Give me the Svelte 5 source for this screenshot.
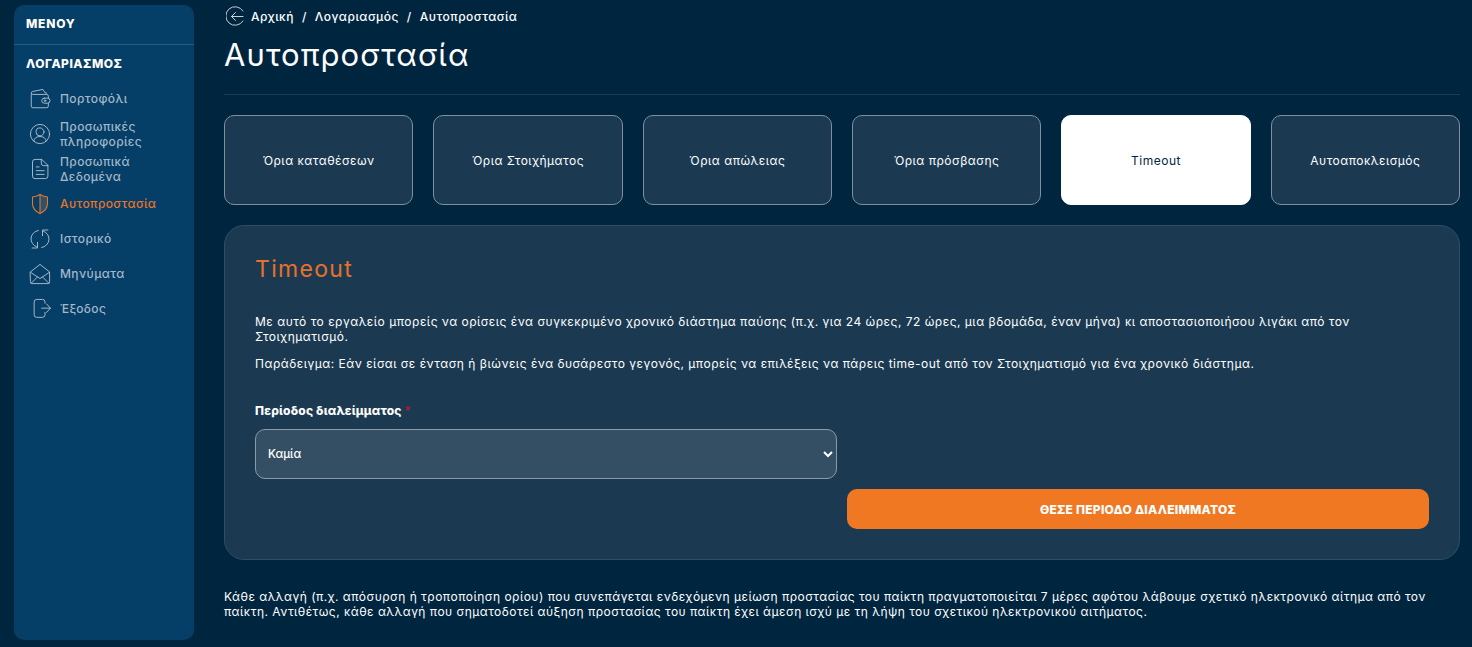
<script>
  const menu = [
    { label: "Πορτοφόλι", icon: "wallet" },
    { label: "Προσωπικές πληροφορίες", icon: "user" },
    { label: "Προσωπικά Δεδομένα", icon: "doc" },
    { label: "Αυτοπροστασία", icon: "shield", active: true },
    { label: "Ιστορικό", icon: "history" },
    { label: "Μηνύματα", icon: "mail" },
    { label: "Έξοδος", icon: "exit" }
  ];
  const tabs = ["Όρια καταθέσεων", "Όρια Στοιχήματος", "Όρια απώλειας", "Όρια πρόσβασης", "Timeout", "Αυτοαποκλεισμός"];
</script>

<div class="page">
  <aside class="sidebar">
    <div class="side-head">ΜΕΝΟΥ</div>
    <div class="side-title">ΛΟΓΑΡΙΑΣΜΟΣ</div>
    <nav class="side-menu">
      {#each menu as item}
        <a class="side-item" class:active={item.active} href="#top">
          <svg class="side-icon" viewBox="0 0 24 24" fill="none" stroke="currentColor" stroke-width="1.100" stroke-linecap="round" stroke-linejoin="round">
            {#if item.icon === "wallet"}
              <path d="M1.500 6.500V20.500a2 2 0 0 0 2 2h16.500a2 2 0 0 0 2-2v-3.500M22 11V8.500a2 2 0 0 0-2-2H3.500a2 2 0 0 1-2-2 1.800 1.800 0 0 1 1.500-1.500L15.500.5 18 4.500l2 .5" />
              <rect x="14" y="11" width="10" height="6" rx="3" />
              <circle cx="18" cy="14" r="1" />
            {:else if item.icon === "user"}
              <circle cx="12" cy="12" r="11.500" />
              <circle cx="12" cy="9.500" r="4.800" />
              <path d="M4.500 20.500c.5-3.500 3.500-5.500 7.500-5.500s7 2 7.500 5.500" />
            {:else if item.icon === "doc"}
              <path d="M13.500 .5H6A3 3 0 0 0 3 3.500v17a3 3 0 0 0 3 3h12.500a3 3 0 0 0 3-3V8z" />
              <path d="M13.500 .5V5a3 3 0 0 0 3 3h5M7.500 9.500h3.500M7.500 14h9.500M7.500 18.500h9.500" />
            {:else if item.icon === "shield"}
              <path d="M12 .5V23.500c5.400-2.400 9-6.800 9-12V3.500C17.500 3.300 15 2.300 12 .5z" fill="#33506a" stroke="none" />
              <path d="M12 .5c3 1.800 5.500 2.800 9 3v8c0 5.200-3.600 9.600-9 12-5.400-2.400-9-6.800-9-12v-8c3.500-.2 6-1.200 9-3z" stroke-width="1.300" />
              <path d="M12 .5v23" stroke-width="1.300" />
            {:else if item.icon === "history"}
              <path d="M16 2.500A10.200 10.200 0 0 1 14 22.200" />
              <path d="M21.500 1.200h-6.500V8" />
              <path d="M8 21.500A10.200 10.200 0 0 1 10 1.800" />
              <path d="M2.500 22.800H9V16" />
            {:else if item.icon === "mail"}
              <path d="M.5 9.500 12 .5l11.500 9v12a2 2 0 0 1-2 2h-19a2 2 0 0 1-2-2z" />
              <path d="M.8 10 12 17.500 23.200 10M1.500 23l7.500-7.500M22.500 23 15 15.500" />
            {:else}
              <path d="M18 5V3.500A3 3 0 0 0 15 .5H8a3 3 0 0 0-3 3V19a3 3 0 0 0 3 3h7a3 3 0 0 0 3-3v-3" />
              <path d="M14 11h10.500M20 6l4.500 5-4.500 5" />
            {/if}
          </svg>
          <span>{item.label}</span>
        </a>
      {/each}
    </nav>
  </aside>

  <main class="content">
    <div class="crumbs">
      <svg class="back" viewBox="0 0 20 20" fill="none" stroke="currentColor" stroke-width="1" stroke-linecap="round" stroke-linejoin="round">
        <path d="M17 5A9.300 9.300 0 1 0 17 15" />
        <path d="M5.500 10.500H17M5.500 10.500l4-4M5.500 10.500l4 4" />
      </svg>
      <span>Αρχική</span><i>/</i><span>Λογαριασμός</span><i>/</i><span>Αυτοπροστασία</span>
    </div>
    <h1>Αυτοπροστασία</h1>
    <hr />

    <div class="tabs">
      {#each tabs as tab}
        <button class="tab" class:active={tab === "Timeout"}>{tab}</button>
      {/each}
    </div>

    <section class="card">
      <h2>Timeout</h2>
      <p class="first">Με αυτό το εργαλείο μπορείς να ορίσεις ένα συγκεκριμένο χρονικό διάστημα παύσης (π.χ. για 24 ώρες, 72 ώρες, μια βδομάδα, έναν μήνα) κι αποστασιοποιήσου λιγάκι από τον Στοιχηματισμό.</p>
      <p>Παράδειγμα: Εάν είσαι σε ένταση ή βιώνεις ένα δυσάρεστο γεγονός, μπορείς να επιλέξεις να πάρεις time-out από τον Στοιχηματισμό για ένα χρονικό διάστημα.</p>
      <div class="form">
        <label for="period">Περίοδος διαλείμματος <em>*</em></label>
        <div class="select-row">
          <select id="period"><option>Καμία</option></select>
        </div>
        <div class="submit-row">
          <button class="submit">ΘΕΣΕ ΠΕΡΙΟΔΟ ΔΙΑΛΕΙΜΜΑΤΟΣ</button>
        </div>
      </div>
    </section>

    <p class="note">Κάθε αλλαγή (π.χ. απόσυρση ή τροποποίηση ορίου) που συνεπάγεται ενδεχόμενη μείωση προστασίας του παίκτη πραγματοποιείται 7 μέρες αφότου λάβουμε σχετικό ηλεκτρονικό αίτημα από τον παίκτη. Αντιθέτως, κάθε αλλαγή που σηματοδοτεί αύξηση προστασίας του παίκτη έχει άμεση ισχύ με τη λήψη του σχετικού ηλεκτρονικού αιτήματος.</p>
  </main>
</div>

<style>
  :global(body) {
    background: #00253f;
    overflow: hidden;
  }

  .page {
    display: flex;
    height: 647px;
    box-sizing: border-box;
    padding: 5px 12px 7px 14px;
    gap: 30px;
    font-family: Inter, sans-serif;
    color: #fff;
  }

  .sidebar {
    width: 180px;
    flex: none;
    background: #053e66;
    border-radius: 10px;
  }

  .side-head {
    height: 39px;
    line-height: 37px;
    padding-left: 12px;
    font-size: 12px;
    font-weight: 800;
    letter-spacing: 0.8px;
    border-bottom: 1px solid #2a5a7e;
  }

  .side-title {
    padding: 11px 0 0 12px;
    line-height: 16px;
    font-size: 12px;
    font-weight: 800;
    letter-spacing: 0.5px;
  }

  .side-menu {
    display: flex;
    flex-direction: column;
    padding: 9px 0 0 16px;
  }

  .side-item {
    display: flex;
    align-items: center;
    gap: 10px;
    height: 35px;
    color: #a3b8c9;
    text-decoration: none;
    font-size: 12px;
    line-height: 15px;
    font-weight: 500;
    letter-spacing: 0.4px;
  }

  .side-item span {
    width: 90px;
  }

  .side-item.active {
    color: #e8752a;
  }

  .side-icon {
    width: 20px;
    height: 20px;
    flex: none;
    overflow: visible;
    color: #b3c1cc;
  }

  .side-item.active .side-icon {
    color: #e8752a;
  }

  .content {
    flex: 1;
    min-width: 0;
  }

  .crumbs {
    display: flex;
    align-items: center;
    height: 22px;
    font-size: 12px;
    font-weight: 500;
    letter-spacing: 0.5px;
    margin-left: 2px;
  }

  .crumbs i {
    font-style: normal;
    margin: 0 8px;
  }

  .back {
    width: 20px;
    height: 20px;
    margin-right: 5px;
    color: #c8d0d6;
  }

  h1 {
    margin: 6px 0 0;
    font-size: 31px;
    line-height: 44px;
    font-weight: 400;
    letter-spacing: 1.1px;
  }

  hr {
    margin: 17px 0 20px;
    border: 0;
    border-top: 1px solid #1c3c55;
  }

  .tabs {
    display: grid;
    grid-template-columns: repeat(6, 1fr);
    gap: 20px;
  }

  .tab {
    height: 90px;
    padding: 0;
    background: #1b3a52;
    border: 1px solid #7f8f9d;
    border-radius: 10px;
    color: #fff;
    font: inherit;
    font-size: 12px;
    letter-spacing: 0.5px;
  }

  .tab.active {
    background: #fff;
    border-color: #fff;
    color: #00253f;
  }

  .card {
    margin-top: 20px;
    height: 335px;
    box-sizing: border-box;
    padding: 28px 30px 0;
    background: #1b3a52;
    border: 1px solid #2f4d66;
    border-radius: 20px;
  }

  h2 {
    margin: 0;
    font-size: 23px;
    line-height: 30px;
    font-weight: 400;
    color: #e8702a;
    letter-spacing: 1.3px;
  }

  .card p {
    margin: 0 0 12px;
    font-size: 12px;
    line-height: 15px;
    letter-spacing: 0.5px;
  }

  .card p.first {
    margin-top: 30px;
  }

  .form {
    margin-top: 32px;
  }

  label {
    display: block;
    font-size: 12px;
    font-weight: 800;
    line-height: 16px;
    letter-spacing: 0.2px;
  }

  label em {
    color: #c3122f;
    font-style: normal;
    font-weight: 400;
  }

  .select-row {
    margin-top: 10px;
    width: 582px;
  }

  select {
    width: 100%;
    height: 50px;
    padding: 0 0 0 8px;
    background: #344f64;
    border: 1px solid #8c9aa7;
    border-radius: 10px;
    color: #fff;
    font: inherit;
    font-size: 11.500px;
    font-weight: 500;
  }

  .submit-row {
    display: flex;
    justify-content: flex-end;
    margin-top: 10px;
  }

  .submit {
    width: 582px;
    height: 40px;
    background: #f07823;
    border: 0;
    border-radius: 10px;
    color: #fff;
    font: inherit;
    font-size: 12px;
    font-weight: 800;
    letter-spacing: 0.25px;
  }

  .note {
    margin: 29px 0 0;
    font-size: 12px;
    line-height: 15px;
    letter-spacing: 0.48px;
  }
</style>
